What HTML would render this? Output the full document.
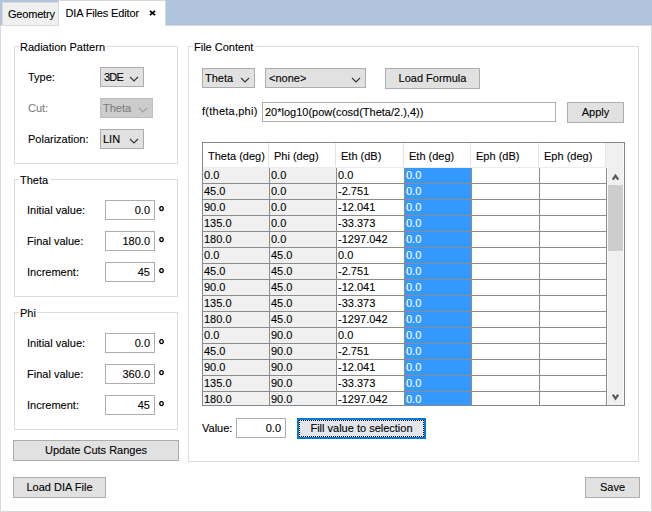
<!DOCTYPE html>
<html><head><meta charset='utf-8'><style>
*{margin:0;padding:0}
html,body{width:652px;height:512px;overflow:hidden;background:#fff}
body{position:relative;font-family:"Liberation Sans",sans-serif;font-size:11px;color:#000}
.a{position:absolute}
.t{position:absolute;font-size:11px;line-height:13px;white-space:pre;-webkit-text-stroke:0.1px currentColor}
svg{display:block}
</style></head><body>
<div class="a" style="left:0px;top:0px;width:652px;height:25px;background:#b0c4de"></div>
<div class="a" style="left:0px;top:25px;width:652px;height:1px;background:#d9d9d9"></div>
<div class="a" style="left:0px;top:25px;width:1px;height:487px;background:#d9d9d9"></div>
<div class="a" style="left:651px;top:25px;width:1px;height:487px;background:#d9d9d9"></div>
<div class="a" style="left:0px;top:511px;width:652px;height:1px;background:#d9d9d9"></div>
<div class="a" style="left:2px;top:2px;width:57px;height:24px;background:#f0f0f0;box-shadow:inset 0 0 0 1px #d9d9d9;"></div>
<div class="t" style="left:8px;top:8px;letter-spacing:-0.2px;">Geometry</div>
<div class="a" style="left:58px;top:0px;width:108px;height:26px;background:#fff;box-shadow:inset 0 0 0 1px #d9d9d9;"></div>
<div class="a" style="left:59px;top:25px;width:106px;height:1px;background:#fff"></div>
<div class="t" style="left:65.5px;top:7px;letter-spacing:-0.15px;">DIA Files Editor</div>
<svg class="a" style="left:149px;top:10px" width="7" height="6" viewBox="0 0 7 6"><path d="M0.9 0.8 L6.1 5.2 M6.1 0.8 L0.9 5.2" stroke="#000" stroke-width="1.7"/></svg>
<div class="a" style="left:14px;top:46px;width:164px;height:118px;box-shadow:inset 0 0 0 1px #dcdcdc;"></div>
<div class="a" style="left:19px;top:46px;width:88px;height:1px;background:#fff"></div>
<div class="t" style="left:20px;top:41px;">Radiation Pattern</div>
<div class="a" style="left:14px;top:179px;width:164px;height:118px;box-shadow:inset 0 0 0 1px #dcdcdc;"></div>
<div class="a" style="left:19px;top:179px;width:32px;height:1px;background:#fff"></div>
<div class="t" style="left:20px;top:174px;">Theta</div>
<div class="a" style="left:14px;top:312px;width:164px;height:118px;box-shadow:inset 0 0 0 1px #dcdcdc;"></div>
<div class="a" style="left:19px;top:312px;width:18px;height:1px;background:#fff"></div>
<div class="t" style="left:20px;top:307px;">Phi</div>
<div class="a" style="left:188px;top:46px;width:451px;height:416px;box-shadow:inset 0 0 0 1px #dcdcdc;"></div>
<div class="a" style="left:193px;top:46px;width:62px;height:1px;background:#fff"></div>
<div class="t" style="left:194px;top:41px;">File Content</div>
<div class="t" style="left:28px;top:71px;">Type:</div>
<div class="a" style="left:100px;top:67px;width:44px;height:20px;background:#e1e1e1;box-shadow:inset 0 0 0 1px #adadad;"></div>
<div class="t" style="left:104px;top:71px;letter-spacing:-0.8px;">3DE</div>
<svg class="a" style="left:129px;top:76px" width="10" height="6" viewBox="0 0 10 6"><path d="M1 1 L5 5 L9 1" fill="none" stroke="#333" stroke-width="1.1"/></svg>
<div class="t" style="left:28px;top:102px;color:#7d7d7d;">Cut:</div>
<div class="a" style="left:100px;top:98px;width:53px;height:20px;background:#cccccc;box-shadow:inset 0 0 0 1px #bfbfbf;"></div>
<div class="t" style="left:103px;top:102px;color:#7d7d7d;">Theta</div>
<svg class="a" style="left:138px;top:107px" width="10" height="6" viewBox="0 0 10 6"><path d="M1 1 L5 5 L9 1" fill="none" stroke="#a0a0a0" stroke-width="1.1"/></svg>
<div class="t" style="left:28px;top:133px;">Polarization:</div>
<div class="a" style="left:100px;top:129px;width:44px;height:20px;background:#e1e1e1;box-shadow:inset 0 0 0 1px #adadad;"></div>
<div class="t" style="left:103px;top:133px;">LIN</div>
<svg class="a" style="left:129px;top:138px" width="10" height="6" viewBox="0 0 10 6"><path d="M1 1 L5 5 L9 1" fill="none" stroke="#333" stroke-width="1.1"/></svg>
<div class="t" style="left:27px;top:204px;">Initial value:</div>
<div class="a" style="left:105px;top:200px;width:50px;height:20px;background:#fff;box-shadow:inset 0 0 0 1px #abadb3;"></div>
<div class="t" style="right:502px;top:204px;">0.0</div>
<svg class="a" style="left:158px;top:206px" width="6" height="6" viewBox="0 0 6 6"><ellipse cx="3.5" cy="2.6" rx="1.75" ry="2.0" fill="none" stroke="#000" stroke-width="1.3"/></svg>
<div class="t" style="left:27px;top:235px;">Final value:</div>
<div class="a" style="left:105px;top:231px;width:50px;height:20px;background:#fff;box-shadow:inset 0 0 0 1px #abadb3;"></div>
<div class="t" style="right:502px;top:235px;">180.0</div>
<svg class="a" style="left:158px;top:237px" width="6" height="6" viewBox="0 0 6 6"><ellipse cx="3.5" cy="2.6" rx="1.75" ry="2.0" fill="none" stroke="#000" stroke-width="1.3"/></svg>
<div class="t" style="left:27px;top:266px;">Increment:</div>
<div class="a" style="left:105px;top:262px;width:50px;height:20px;background:#fff;box-shadow:inset 0 0 0 1px #abadb3;"></div>
<div class="t" style="right:502px;top:266px;">45</div>
<svg class="a" style="left:158px;top:268px" width="6" height="6" viewBox="0 0 6 6"><ellipse cx="3.5" cy="2.6" rx="1.75" ry="2.0" fill="none" stroke="#000" stroke-width="1.3"/></svg>
<div class="t" style="left:27px;top:337px;">Initial value:</div>
<div class="a" style="left:105px;top:333px;width:50px;height:20px;background:#fff;box-shadow:inset 0 0 0 1px #abadb3;"></div>
<div class="t" style="right:502px;top:337px;">0.0</div>
<svg class="a" style="left:158px;top:339px" width="6" height="6" viewBox="0 0 6 6"><ellipse cx="3.5" cy="2.6" rx="1.75" ry="2.0" fill="none" stroke="#000" stroke-width="1.3"/></svg>
<div class="t" style="left:27px;top:368px;">Final value:</div>
<div class="a" style="left:105px;top:364px;width:50px;height:20px;background:#fff;box-shadow:inset 0 0 0 1px #abadb3;"></div>
<div class="t" style="right:502px;top:368px;">360.0</div>
<svg class="a" style="left:158px;top:370px" width="6" height="6" viewBox="0 0 6 6"><ellipse cx="3.5" cy="2.6" rx="1.75" ry="2.0" fill="none" stroke="#000" stroke-width="1.3"/></svg>
<div class="t" style="left:27px;top:399px;">Increment:</div>
<div class="a" style="left:105px;top:395px;width:50px;height:20px;background:#fff;box-shadow:inset 0 0 0 1px #abadb3;"></div>
<div class="t" style="right:502px;top:399px;">45</div>
<svg class="a" style="left:158px;top:401px" width="6" height="6" viewBox="0 0 6 6"><ellipse cx="3.5" cy="2.6" rx="1.75" ry="2.0" fill="none" stroke="#000" stroke-width="1.3"/></svg>
<div class="a" style="left:13px;top:440px;width:166px;height:21px;background:#e1e1e1;box-shadow:inset 0 0 0 1px #adadad;"></div>
<div class="t" style="left:13px;width:166px;top:444px;text-align:center;">Update Cuts Ranges</div>
<div class="a" style="left:13px;top:477px;width:93px;height:21px;background:#e1e1e1;box-shadow:inset 0 0 0 1px #adadad;"></div>
<div class="t" style="left:13px;width:93px;top:481px;text-align:center;">Load DIA File</div>
<div class="a" style="left:585px;top:477px;width:55px;height:21px;background:#e1e1e1;box-shadow:inset 0 0 0 1px #adadad;"></div>
<div class="t" style="left:585px;width:55px;top:481px;text-align:center;">Save</div>
<div class="a" style="left:202px;top:68px;width:53px;height:20px;background:#e1e1e1;box-shadow:inset 0 0 0 1px #adadad;"></div>
<div class="t" style="left:205px;top:72px;">Theta</div>
<svg class="a" style="left:240px;top:77px" width="10" height="6" viewBox="0 0 10 6"><path d="M1 1 L5 5 L9 1" fill="none" stroke="#333" stroke-width="1.1"/></svg>
<div class="a" style="left:265px;top:68px;width:101px;height:20px;background:#e1e1e1;box-shadow:inset 0 0 0 1px #adadad;"></div>
<div class="t" style="left:269px;top:72px;">&lt;none&gt;</div>
<svg class="a" style="left:351px;top:77px" width="10" height="6" viewBox="0 0 10 6"><path d="M1 1 L5 5 L9 1" fill="none" stroke="#333" stroke-width="1.1"/></svg>
<div class="a" style="left:385px;top:68px;width:95px;height:21px;background:#e1e1e1;box-shadow:inset 0 0 0 1px #adadad;"></div>
<div class="t" style="left:385px;width:95px;top:72px;text-align:center;">Load Formula</div>
<div class="t" style="left:202px;top:105px;letter-spacing:0.25px;">f(theta,phi)</div>
<div class="a" style="left:262px;top:102px;width:294px;height:20px;background:#fff;box-shadow:inset 0 0 0 1px #abadb3;"></div>
<div class="t" style="left:265px;top:106px;">20*log10(pow(cosd(Theta/2.),4))</div>
<div class="a" style="left:567px;top:102px;width:57px;height:21px;background:#e1e1e1;box-shadow:inset 0 0 0 1px #adadad;"></div>
<div class="t" style="left:567px;width:57px;top:106px;text-align:center;">Apply</div>
<div class="a" style="left:202px;top:142px;width:423px;height:264px;background:#fff;box-shadow:inset 0 0 0 1px #828790;"></div>
<div class="a" style="left:203px;top:167px;width:66px;height:238px;background:#f0f0f0"></div>
<div class="a" style="left:270px;top:167px;width:66px;height:238px;background:#f0f0f0"></div>
<div class="a" style="left:405px;top:168px;width:66px;height:237px;background:#3399ff"></div>
<div class="a" style="left:268px;top:143px;width:1px;height:24px;background:#e5e5e5"></div>
<div class="a" style="left:335px;top:143px;width:1px;height:24px;background:#e5e5e5"></div>
<div class="a" style="left:403px;top:143px;width:1px;height:24px;background:#e5e5e5"></div>
<div class="a" style="left:470px;top:143px;width:1px;height:24px;background:#e5e5e5"></div>
<div class="a" style="left:538px;top:143px;width:1px;height:24px;background:#e5e5e5"></div>
<div class="a" style="left:605px;top:143px;width:1px;height:24px;background:#e5e5e5"></div>
<div class="a" style="left:203px;top:167px;width:404px;height:1px;background:#ececec"></div>
<div class="t" style="left:208px;top:150px;">Theta (deg)</div>
<div class="t" style="left:274px;top:150px;">Phi (deg)</div>
<div class="t" style="left:341px;top:150px;">Eth (dB)</div>
<div class="t" style="left:409px;top:150px;">Eth (deg)</div>
<div class="t" style="left:476px;top:150px;">Eph (dB)</div>
<div class="t" style="left:544px;top:150px;">Eph (deg)</div>
<div class="a" style="left:269px;top:168px;width:1px;height:237px;background:#8c8c8c"></div>
<div class="a" style="left:336px;top:168px;width:1px;height:237px;background:#8c8c8c"></div>
<div class="a" style="left:404px;top:168px;width:1px;height:237px;background:#8c8c8c"></div>
<div class="a" style="left:471px;top:168px;width:1px;height:237px;background:#8c8c8c"></div>
<div class="a" style="left:539px;top:168px;width:1px;height:237px;background:#8c8c8c"></div>
<div class="a" style="left:606px;top:168px;width:1px;height:237px;background:#8c8c8c"></div>
<div class="a" style="left:203px;top:183px;width:404px;height:1px;background:#8c8c8c"></div>
<div class="a" style="left:203px;top:199px;width:404px;height:1px;background:#8c8c8c"></div>
<div class="a" style="left:203px;top:215px;width:404px;height:1px;background:#8c8c8c"></div>
<div class="a" style="left:203px;top:231px;width:404px;height:1px;background:#8c8c8c"></div>
<div class="a" style="left:203px;top:247px;width:404px;height:1px;background:#8c8c8c"></div>
<div class="a" style="left:203px;top:263px;width:404px;height:1px;background:#8c8c8c"></div>
<div class="a" style="left:203px;top:279px;width:404px;height:1px;background:#8c8c8c"></div>
<div class="a" style="left:203px;top:295px;width:404px;height:1px;background:#8c8c8c"></div>
<div class="a" style="left:203px;top:311px;width:404px;height:1px;background:#8c8c8c"></div>
<div class="a" style="left:203px;top:327px;width:404px;height:1px;background:#8c8c8c"></div>
<div class="a" style="left:203px;top:343px;width:404px;height:1px;background:#8c8c8c"></div>
<div class="a" style="left:203px;top:359px;width:404px;height:1px;background:#8c8c8c"></div>
<div class="a" style="left:203px;top:375px;width:404px;height:1px;background:#8c8c8c"></div>
<div class="a" style="left:203px;top:391px;width:404px;height:1px;background:#8c8c8c"></div>
<div class="t" style="left:204px;top:169px;">0.0</div>
<div class="t" style="left:271px;top:169px;">0.0</div>
<div class="t" style="left:338px;top:169px;">0.0</div>
<div class="t" style="left:406px;top:169px;color:#fff;">0.0</div>
<div class="t" style="left:204px;top:185px;">45.0</div>
<div class="t" style="left:271px;top:185px;">0.0</div>
<div class="t" style="left:338px;top:185px;">-2.751</div>
<div class="t" style="left:406px;top:185px;color:#fff;">0.0</div>
<div class="t" style="left:204px;top:201px;">90.0</div>
<div class="t" style="left:271px;top:201px;">0.0</div>
<div class="t" style="left:338px;top:201px;">-12.041</div>
<div class="t" style="left:406px;top:201px;color:#fff;">0.0</div>
<div class="t" style="left:204px;top:217px;">135.0</div>
<div class="t" style="left:271px;top:217px;">0.0</div>
<div class="t" style="left:338px;top:217px;">-33.373</div>
<div class="t" style="left:406px;top:217px;color:#fff;">0.0</div>
<div class="t" style="left:204px;top:233px;">180.0</div>
<div class="t" style="left:271px;top:233px;">0.0</div>
<div class="t" style="left:338px;top:233px;">-1297.042</div>
<div class="t" style="left:406px;top:233px;color:#fff;">0.0</div>
<div class="t" style="left:204px;top:249px;">0.0</div>
<div class="t" style="left:271px;top:249px;">45.0</div>
<div class="t" style="left:338px;top:249px;">0.0</div>
<div class="t" style="left:406px;top:249px;color:#fff;">0.0</div>
<div class="t" style="left:204px;top:265px;">45.0</div>
<div class="t" style="left:271px;top:265px;">45.0</div>
<div class="t" style="left:338px;top:265px;">-2.751</div>
<div class="t" style="left:406px;top:265px;color:#fff;">0.0</div>
<div class="t" style="left:204px;top:281px;">90.0</div>
<div class="t" style="left:271px;top:281px;">45.0</div>
<div class="t" style="left:338px;top:281px;">-12.041</div>
<div class="t" style="left:406px;top:281px;color:#fff;">0.0</div>
<div class="t" style="left:204px;top:297px;">135.0</div>
<div class="t" style="left:271px;top:297px;">45.0</div>
<div class="t" style="left:338px;top:297px;">-33.373</div>
<div class="t" style="left:406px;top:297px;color:#fff;">0.0</div>
<div class="t" style="left:204px;top:313px;">180.0</div>
<div class="t" style="left:271px;top:313px;">45.0</div>
<div class="t" style="left:338px;top:313px;">-1297.042</div>
<div class="t" style="left:406px;top:313px;color:#fff;">0.0</div>
<div class="t" style="left:204px;top:329px;">0.0</div>
<div class="t" style="left:271px;top:329px;">90.0</div>
<div class="t" style="left:338px;top:329px;">0.0</div>
<div class="t" style="left:406px;top:329px;color:#fff;">0.0</div>
<div class="t" style="left:204px;top:345px;">45.0</div>
<div class="t" style="left:271px;top:345px;">90.0</div>
<div class="t" style="left:338px;top:345px;">-2.751</div>
<div class="t" style="left:406px;top:345px;color:#fff;">0.0</div>
<div class="t" style="left:204px;top:361px;">90.0</div>
<div class="t" style="left:271px;top:361px;">90.0</div>
<div class="t" style="left:338px;top:361px;">-12.041</div>
<div class="t" style="left:406px;top:361px;color:#fff;">0.0</div>
<div class="t" style="left:204px;top:377px;">135.0</div>
<div class="t" style="left:271px;top:377px;">90.0</div>
<div class="t" style="left:338px;top:377px;">-33.373</div>
<div class="t" style="left:406px;top:377px;color:#fff;">0.0</div>
<div class="t" style="left:204px;top:393px;">180.0</div>
<div class="t" style="left:271px;top:393px;">90.0</div>
<div class="t" style="left:338px;top:393px;">-1297.042</div>
<div class="t" style="left:406px;top:393px;color:#fff;">0.0</div>
<div class="a" style="left:607px;top:143px;width:17px;height:262px;background:#fafafa"></div>
<div class="a" style="left:608px;top:143px;width:15px;height:262px;background:#f0f0f0"></div>
<div class="a" style="left:606px;top:143px;width:2px;height:24px;background:#f0f0f0"></div>
<div class="a" style="left:608px;top:185px;width:15px;height:66px;background:#cdcdcd"></div>
<svg class="a" style="left:611px;top:173px" width="10" height="8" viewBox="0 0 10 8"><path d="M1.8 6.6 L4.5 2.6 L7.2 6.6" fill="none" stroke="#5a5a5a" stroke-width="2.2"/></svg>
<svg class="a" style="left:611px;top:393px" width="10" height="8" viewBox="0 0 10 8"><path d="M1.8 1.6 L4.5 5.6 L7.2 1.6" fill="none" stroke="#5a5a5a" stroke-width="2.2"/></svg>
<div class="t" style="left:202px;top:422px;">Value:</div>
<div class="a" style="left:236px;top:418px;width:50px;height:20px;background:#fff;box-shadow:inset 0 0 0 1px #abadb3;"></div>
<div class="t" style="right:371px;top:422px;">0.0</div>
<div class="a" style="left:297px;top:418px;width:129px;height:21px;background:#e2e5ea;box-shadow:inset 0 0 0 1px #0078d7;box-shadow:inset 0 0 0 2px #0078d7;"></div>
<div class="a" style="left:299px;top:420px;width:125px;height:17px;box-sizing:border-box;border:1px dotted #000"></div>
<div class="t" style="left:297px;width:129px;top:422px;text-align:center;">Fill value to selection</div>
</body></html>
